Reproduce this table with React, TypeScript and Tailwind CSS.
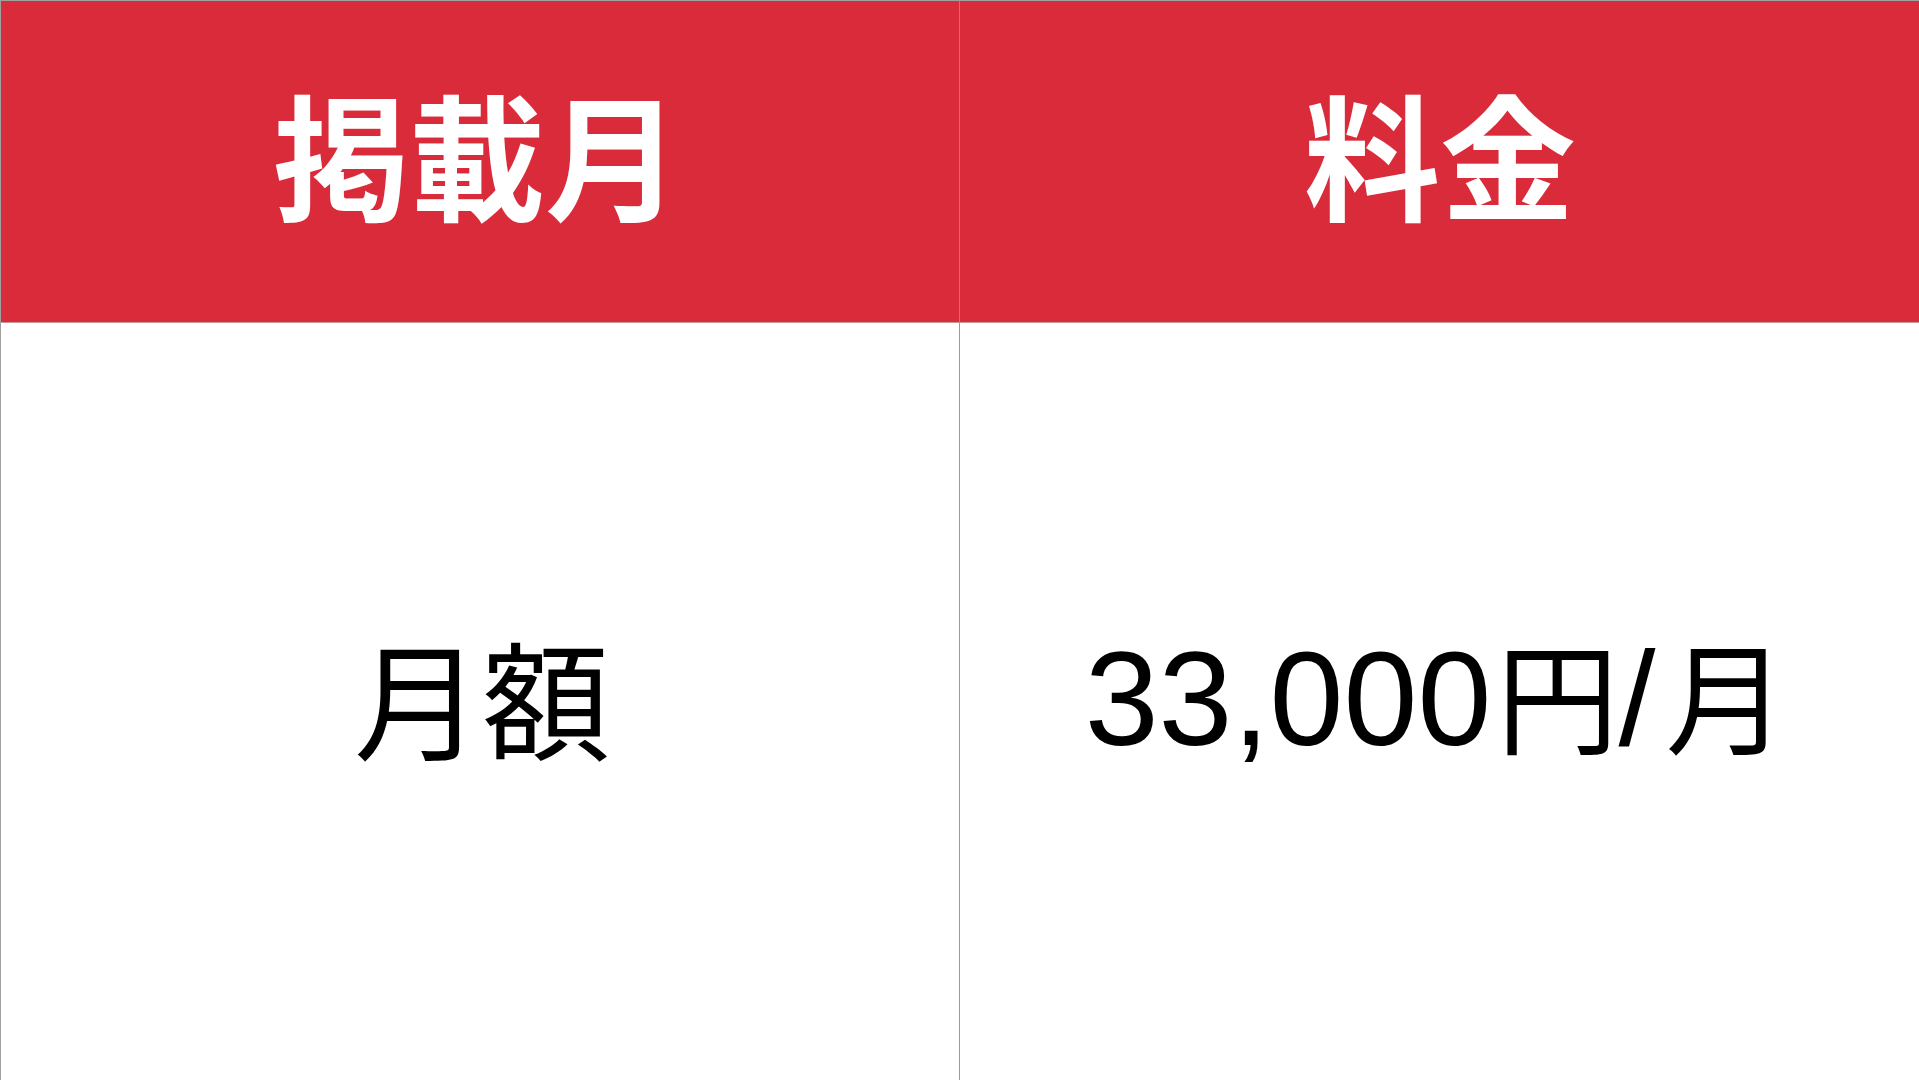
export default function App() {
  const jp = { fontFamily: '"Noto Sans CJK JP", "Noto Sans", sans-serif' };
  const mixed = { fontFamily: '"Liberation Sans", "Noto Sans CJK JP", sans-serif' };
  return (
    <div className="w-[1919px] h-[1080px] overflow-hidden bg-white">
      <div className="grid grid-cols-[959px_960px] grid-rows-[322px_1fr] h-full border-t border-l border-[#a0a0a0]">
        {/* header row */}
        <div className="bg-[#d92b3a] border-r border-[#e2646f] border-b border-b-[#c9999d] flex items-center justify-center">
          <span className="text-white font-bold text-[136px] leading-none pr-[6px] pb-[20px]" style={jp}>
            掲載月
          </span>
        </div>
        <div className="bg-[#d92b3a] border-b border-[#c9999d] flex items-center justify-center">
          <span className="text-white font-bold text-[136px] leading-none pb-[20px]" style={jp}>
            料金
          </span>
        </div>

        {/* body row */}
        <div className="border-r border-[#9a9a9a] flex items-center justify-center">
          <span className="text-black text-[128px] leading-none pb-[12px] pl-[4px]" style={jp}>
            月額
          </span>
        </div>
        <div className="flex items-center justify-center">
          <span className="text-black text-[133px] leading-none pr-[8px] pb-[4px] whitespace-nowrap" style={mixed}>
            33,000
            <span className="text-[122px] ml-[5px]">円</span>/
            <span className="text-[122px] ml-[10px]">月</span>
          </span>
        </div>
      </div>
    </div>
  );
}
